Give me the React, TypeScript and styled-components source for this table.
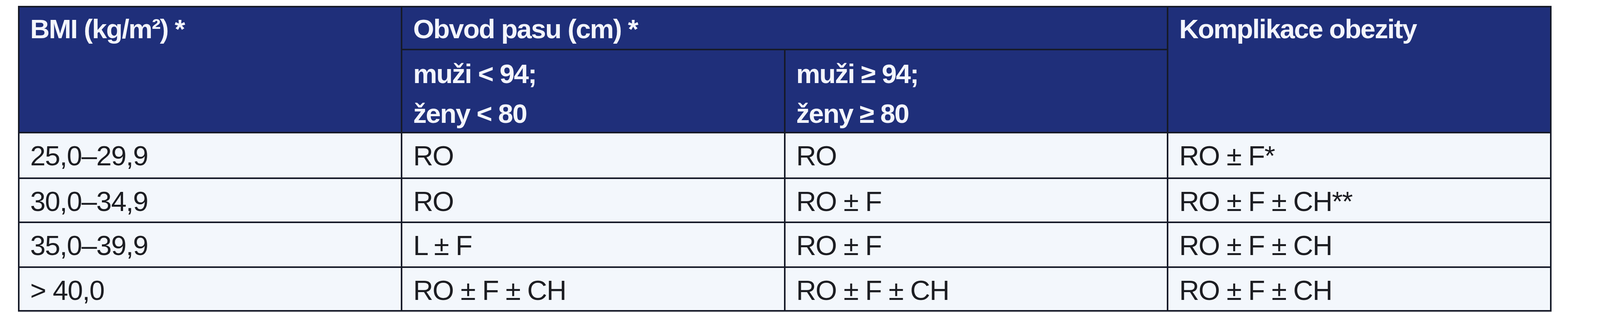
import styled, { createGlobalStyle } from "styled-components";

const GlobalStyle = createGlobalStyle`
  html, body {
    margin: 0;
    padding: 0;
    background: #ffffff;
    overflow: hidden;
  }
  body {
    font-family: "Liberation Sans", Arial, sans-serif;
  }
`;

// horizontal sizes follow the window width (reference frame is 4479px wide)
const Page = styled.div`
  padding: 15px 0 0 1.116vw;
`;

const Grid = styled.div`
  box-sizing: border-box;
  width: 95.85vw;
  display: grid;
  grid-template-columns: repeat(4, 1fr);
  grid-template-rows: 106px 209px 113px 109px 111px 108px;
  gap: 4px;
  padding: 4px;
  background: #161a28;
`;

const HeadCell = styled.div<{ $rows?: number; $cols?: number; $sub?: boolean }>`
  grid-row: span ${(p) => p.$rows ?? 1};
  grid-column: span ${(p) => p.$cols ?? 1};
  background: #1f2f7a;
  color: #f3f5fc;
  font-weight: 700;
  font-size: 69px;
  letter-spacing: -0.05vw;
  line-height: ${(p) => (p.$sub ? "102px" : "69px")};
  padding: ${(p) => (p.$sub ? "10px 0.67vw 0" : "21px 0.67vw 0")};
  white-space: nowrap;
`;

const Cell = styled.div`
  background: #f3f7fc;
  color: #1c1d22;
  font-size: 71px;
  letter-spacing: -0.04vw;
  line-height: 71px;
  padding: 22px 0.67vw 0;
  white-space: nowrap;
`;

type Row = [string, string, string, string];

const rows: Row[] = [
  ["25,0–29,9", "RO", "RO", "RO ± F*"],
  ["30,0–34,9", "RO", "RO ± F", "RO ± F ± CH**"],
  ["35,0–39,9", "L ± F", "RO ± F", "RO ± F ± CH"],
  ["> 40,0", "RO ± F ± CH", "RO ± F ± CH", "RO ± F ± CH"],
];

export default function App() {
  return (
    <>
      <GlobalStyle />
      <Page>
        <Grid>
          <HeadCell $rows={2}>BMI (kg/m²) *</HeadCell>
          <HeadCell $cols={2}>Obvod pasu (cm) *</HeadCell>
          <HeadCell $rows={2}>Komplikace obezity</HeadCell>
          <HeadCell $sub>
            muži &lt; 94;
            <br />
            ženy &lt; 80
          </HeadCell>
          <HeadCell $sub>
            muži ≥ 94;
            <br />
            ženy ≥ 80
          </HeadCell>
          {rows.map((row) =>
            row.map((value, i) => <Cell key={row[0] + i}>{value}</Cell>)
          )}
        </Grid>
      </Page>
    </>
  );
}
